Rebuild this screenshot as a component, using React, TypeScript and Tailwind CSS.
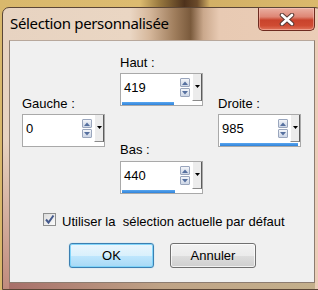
import React from "react";

function SpinBtn({ up }: { up?: boolean }) {
  return (
    <div className="h-[9px] w-[10px] rounded-[1px] border border-[#9aa6bd] bg-[linear-gradient(180deg,#f4f6fa_0%,#dfe5ef_50%,#cdd6e6_100%)] flex items-center justify-center">
      <svg width="6" height="4" viewBox="0 0 6 4">
        {up ? (
          <path d="M0 4 L3 0.5 L6 4 Z" fill="#56709f" />
        ) : (
          <path d="M0 0 L3 3.5 L6 0 Z" fill="#56709f" />
        )}
      </svg>
    </div>
  );
}

function SpinBox({ value, bar }: { value: string; bar: number }) {
  return (
    <div className="w-[83px] h-[33px] border border-[#a9a9a9] bg-white flex flex-col">
      <div className="flex h-[28px]">
        <div className="flex-1 pl-[3px] pt-[6px] text-[13px] leading-[15px] text-black">{value}</div>
        <div className="w-[10px] flex flex-col gap-[1px] pt-[4px]">
          <SpinBtn up />
          <SpinBtn />
        </div>
        <div className="w-[10px] ml-[2px] h-[27px] border-r border-b border-r-[#5c5c5c] border-b-[#8a8a8a] border-l border-l-white bg-[#ececec] flex justify-center pt-[11px]">
          <svg width="5" height="3" viewBox="0 0 5 3">
            <path d="M0 0 L5 0 L2.5 3 Z" fill="#000" />
          </svg>
        </div>
      </div>
      <div className="h-[3px] mx-[1px]">
        <div className="h-full bg-[linear-gradient(180deg,#5aa6ef,#2f83da)]" style={{ width: bar }} />
      </div>
    </div>
  );
}

function Label({ children }: { children: React.ReactNode }) {
  return <div className="text-[13px] leading-[15px] text-black whitespace-pre">{children}</div>;
}

export default function App() {
  return (
    <div className="w-[318px] h-[290px] overflow-hidden flex flex-col [font-family:'Liberation_Sans',Arial,sans-serif] bg-[linear-gradient(90deg,#d9b86c_0%,#dcbb70_44%,#9a7a40_50%,#4e321c_58%,#6a4a2a_62%,#d2b066_66%,#dab96c_100%)]">
      <div className="h-[7px] shrink-0" />
      <div className="ml-[2px] w-[320px] flex-1 rounded-t-[7px] border border-[#5b4636] flex flex-col bg-[linear-gradient(90deg,#e7d3c1_0%,#ead6c3_40%,#d6b89c_46%,#9f7d5c_54%,#7a5a3c_59%,#caa88c_63%,#e8cab3_68%,#ebcdb7_100%)]">
        <div className="h-[32px] shrink-0 flex items-start justify-between">
          <div className="pl-[7px] pt-[6px] text-[15px] leading-[18px] text-black [font-family:'Noto_Sans',sans-serif] tracking-[-0.35px]">
            Sélection personnalisée
          </div>
          <div className="mr-[6px] w-[57px] h-[23px] rounded-b-[5px] border border-t-0 border-[#6e2b20] bg-[linear-gradient(180deg,#eab0a2_0%,#de8675_40%,#c9432c_55%,#cf4b32_80%,#e0745c_100%)] shadow-[inset_0_0_0_1px_rgba(255,210,200,0.45)] flex items-center justify-center">
            <svg width="16" height="13" viewBox="0 0 16 13">
              <path d="M3 2 L13 11 M13 2 L3 11" stroke="#5a3a34" strokeWidth="4.6" strokeLinecap="round" />
              <path d="M3 2 L13 11 M13 2 L3 11" stroke="#ffffff" strokeWidth="2.6" strokeLinecap="round" />
            </svg>
          </div>
        </div>
        <div className="flex flex-1">
          <div className="w-[6px] shrink-0 bg-[linear-gradient(180deg,rgba(0,0,0,0)_40%,rgba(160,80,70,0.55)_100%)]" />
          <div className="w-[306px] shrink-0 flex flex-col">
            <div className="h-[243px] bg-[#f0f0f0] border border-[#8c7c70] border-t-[#b8a89c] flex flex-col">
              <div className="flex pl-[12px]">
                <div className="w-[83px] pt-[55px] flex flex-col gap-[3px]">
                  <Label>Gauche :</Label>
                  <SpinBox value="0" bar={0} />
                </div>
                <div className="w-[83px] ml-[15px] pt-[14px] flex flex-col">
                  <Label>Haut :</Label>
                  <div className="mt-[3px]">
                    <SpinBox value="419" bar={52} />
                  </div>
                  <div className="mt-[36px]">
                    <Label>Bas :</Label>
                  </div>
                  <div className="mt-[4px]">
                    <SpinBox value="440" bar={53} />
                  </div>
                </div>
                <div className="w-[83px] ml-[15px] pt-[55px] flex flex-col gap-[3px]">
                  <Label>Droite :</Label>
                  <SpinBox value="985" bar={78} />
                </div>
              </div>
              <div className="flex items-start pl-[33px] mt-[19px]">
                <div className="w-[13px] h-[13px] border border-[#8e8f8f] bg-[linear-gradient(135deg,#dcdcdc,#fbfbfb)] flex items-center justify-center">
                  <svg width="11" height="11" viewBox="0 0 11 11">
                    <path d="M2 5.5 L4.5 8.5 L9.5 1.5" stroke="#44598c" strokeWidth="2" fill="none" />
                  </svg>
                </div>
                <div className="ml-[6px] mt-[1px] text-[13px] leading-[15px] text-black whitespace-pre">
                  Utiliser la  sélection actuelle par défaut
                </div>
              </div>
              <div className="flex pl-[59px] mt-[14px]">
                <div className="w-[85px] h-[25px] rounded-[3px] border border-[#3c7fb1] shadow-[inset_0_0_0_1px_rgba(120,210,250,0.9),0_0_1px_#6ac8f0] bg-[linear-gradient(180deg,#eaf6fd_0%,#d9f0fc_50%,#bee6fd_52%,#a7d9f5_100%)] flex items-center justify-center text-[13px] leading-[15px] text-black">
                  OK
                </div>
                <div className="ml-[16px] w-[86px] h-[25px] rounded-[3px] border border-[#707070] shadow-[inset_0_0_0_1px_rgba(255,255,255,0.7)] bg-[linear-gradient(180deg,#f2f2f2_0%,#ebebeb_50%,#dddddd_52%,#cfcfcf_100%)] flex items-center justify-center text-[13px] leading-[15px] text-black">
                  Annuler
                </div>
              </div>
            </div>
            <div className="flex-1 bg-[linear-gradient(90deg,#a8706a_0%,#bfa386_50%,#c4b08c_100%)]" />
          </div>
          <div className="flex-1" />
        </div>
      </div>
    </div>
  );
}
